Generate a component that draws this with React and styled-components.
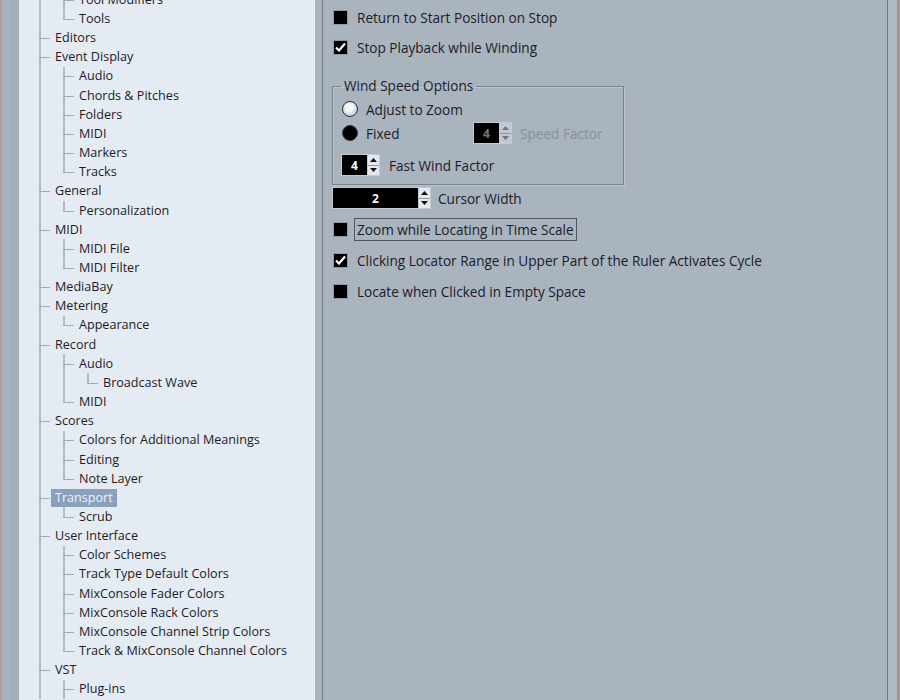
import React from "react";
import styled, { createGlobalStyle } from "styled-components";

const GlobalStyle = createGlobalStyle`
  html, body {
    margin: 0;
    padding: 0;
    background: #a9b4bf;
  }
  * {
    box-sizing: border-box;
  }
`;

const ROW_H = 19.17;
const INDENT = 24;

// preferences tree, scrolled part-way down
const treeItems = [
  { label: "Tool Modifiers", level: 2 },
  { label: "Tools", level: 2 },
  { label: "Editors", level: 1 },
  { label: "Event Display", level: 1 },
  { label: "Audio", level: 2 },
  { label: "Chords & Pitches", level: 2 },
  { label: "Folders", level: 2 },
  { label: "MIDI", level: 2 },
  { label: "Markers", level: 2 },
  { label: "Tracks", level: 2 },
  { label: "General", level: 1 },
  { label: "Personalization", level: 2 },
  { label: "MIDI", level: 1 },
  { label: "MIDI File", level: 2 },
  { label: "MIDI Filter", level: 2 },
  { label: "MediaBay", level: 1 },
  { label: "Metering", level: 1 },
  { label: "Appearance", level: 2 },
  { label: "Record", level: 1 },
  { label: "Audio", level: 2 },
  { label: "Broadcast Wave", level: 3 },
  { label: "MIDI", level: 2 },
  { label: "Scores", level: 1 },
  { label: "Colors for Additional Meanings", level: 2 },
  { label: "Editing", level: 2 },
  { label: "Note Layer", level: 2 },
  { label: "Transport", level: 1, selected: true },
  { label: "Scrub", level: 2 },
  { label: "User Interface", level: 1 },
  { label: "Color Schemes", level: 2 },
  { label: "Track Type Default Colors", level: 2 },
  { label: "MixConsole Fader Colors", level: 2 },
  { label: "MixConsole Rack Colors", level: 2 },
  { label: "MixConsole Channel Strip Colors", level: 2 },
  { label: "Track & MixConsole Channel Colors", level: 2 },
  { label: "VST", level: 1 },
  { label: "Plug-ins", level: 2 },
];

// does the item at index i have a later sibling? (list keeps going past the end)
function hasNext(items, i) {
  const lvl = items[i].level;
  for (let j = i + 1; j < items.length; j++) {
    if (items[j].level < lvl) return false;
    if (items[j].level === lvl) return true;
  }
  return true;
}

function ancestorHasNext(items, i, depth) {
  for (let j = i - 1; j >= 0; j--) {
    if (items[j].level === depth) return hasNext(items, j);
    if (items[j].level < depth) return true;
  }
  return true;
}

const Window = styled.div`
  display: flex;
  width: 900px;
  height: 700px;
  overflow: hidden;
  font-family: "Open Sans", "Noto Sans", sans-serif;
`;

const LeftEdge = styled.div`
  flex: 0 0 19px;
  background: linear-gradient(
    to right,
    #b99a9d 0 2px,
    #a7b3be 2px 11px,
    #a2aeb9 11px
  );
`;

const TreePanel = styled.div`
  flex: 0 0 296px;
  background: #e5ebf2;
  overflow: hidden;
`;

const TreeList = styled.div`
  margin-top: -9.8px;
`;

const TreeRow = styled.div`
  position: relative;
  height: ${ROW_H}px;
  display: flex;
  align-items: center;
`;

const VLine = styled.span`
  position: absolute;
  left: ${(p) => p.$x}px;
  top: 0;
  width: 2px;
  height: ${(p) => (p.$half ? "50%" : "100%")};
  background: #b3bcc7;
`;

const HLine = styled.span`
  position: absolute;
  left: ${(p) => p.$x}px;
  top: 50%;
  width: 11px;
  height: 1px;
  background: #a3acb7;
`;

const TreeLabel = styled.span`
  margin-left: ${(p) => p.$x}px;
  padding: 0 4px;
  height: 18px;
  line-height: 18px;
  font-size: 12.6px;
  white-space: nowrap;
  color: ${(p) => (p.$selected ? "#eef3f9" : "#1c1b27")};
  background: ${(p) => (p.$selected ? "#8aa0bd" : "transparent")};
`;

const Gutter = styled.div`
  flex: 0 0 8px;
  background: #a9b4bf;
  border-right: 1px solid #727c87;
`;

const Content = styled.div`
  flex: 0 0 564px;
  background: #a9b4bf;
  padding: 5px 0 0 9px;
  display: flex;
  flex-direction: column;
  align-items: flex-start;
  font-size: 13.6px;
  color: #1c1b27;
`;

const RightEdge = styled.div`
  flex: 1;
  border-left: 1px solid #6e7782;
  background: linear-gradient(
    to right,
    #b1bbc5 0 9px,
    #8f98a2 9px 10px,
    #a9929a 10px
  );
`;

const Row = styled.div`
  display: flex;
  align-items: center;
  height: ${(p) => p.$h || 22}px;
  margin-top: ${(p) => p.$mt || 0}px;
  gap: ${(p) => p.$gap || 9}px;
  white-space: nowrap;
`;

const Box = styled.span`
  width: 15px;
  height: 15px;
  margin-left: 1px;
  background: #000;
  border: 1px solid #8f98a3;
  display: flex;
  align-items: center;
  justify-content: center;
`;

const Label = styled.span`
  color: ${(p) => (p.$disabled ? "#87919d" : "#1c1b27")};
  ${(p) =>
    p.$focused &&
    `
    border: 1px solid #4f5761;
    padding: 1px 2px;
    margin-left: -3px;
  `}
`;

const GroupBox = styled.fieldset`
  margin: 18px 0 0 0;
  width: 292px;
  padding: 0 8px 8px 8px;
  border: 1px solid #78828d;
  box-shadow: inset 1px 1px 0 #bdc6cf, 1px 1px 0 #bdc6cf;
  display: flex;
  flex-direction: column;
  align-items: flex-start;
`;

const Legend = styled.legend`
  padding: 0 3px;
  height: 18px;
  line-height: 18px;
  font-size: 13.6px;
  color: #1c1b27;
`;

const RadioDot = styled.span`
  width: 16px;
  height: 16px;
  margin-left: 1px;
  border-radius: 50%;
  border: 1px solid ${(p) => (p.$on ? "#30353b" : "#2a2e34")};
  background: ${(p) =>
    p.$on
      ? "#000"
      : "radial-gradient(circle at 45% 40%, #f4f6f8 0 30%, #bcc4cc 80%)"};
`;

const FixedLabel = styled.span`
  width: 99px;
`;

const Spin = styled.div`
  display: flex;
  height: 22px;
`;

const SpinValue = styled.div`
  width: ${(p) => p.$w}px;
  background: #000;
  border: 1px solid #c3cad2;
  border-right: none;
  display: flex;
  align-items: center;
  justify-content: center;
  font-weight: 700;
  font-size: 12px;
  color: ${(p) => (p.$disabled ? "#6d7783" : "#f2f6ff")};
`;

const SpinArrows = styled.div`
  width: 13px;
  display: flex;
  flex-direction: column;
  border: 1px solid #c3cad2;
  background: #8d96a1;
  gap: 1px;
`;

const SpinButton = styled.div`
  flex: 1;
  background: ${(p) => (p.$disabled ? "#c2c9d1" : "#e4e8ec")};
  display: flex;
  align-items: center;
  justify-content: center;
`;

function Arrow({ down, disabled }) {
  return (
    <svg width="7" height="4" viewBox="0 0 7 4">
      <polygon
        points={down ? "0,0 7,0 3.5,4" : "0,4 7,4 3.5,0"}
        fill={disabled ? "#6d7783" : "#111"}
      />
    </svg>
  );
}

function SpinBox({ value, width, disabled }) {
  return (
    <Spin>
      <SpinValue $w={width} $disabled={disabled}>
        {value}
      </SpinValue>
      <SpinArrows>
        <SpinButton $disabled={disabled}>
          <Arrow disabled={disabled} />
        </SpinButton>
        <SpinButton $disabled={disabled}>
          <Arrow down disabled={disabled} />
        </SpinButton>
      </SpinArrows>
    </Spin>
  );
}

function Check({ checked, label, focused, mt }) {
  return (
    <Row $mt={mt} $h={24}>
      <Box>
        {checked && (
          <svg width="11" height="10" viewBox="0 0 11 10">
            <path
              d="M1 5.5 L4 8.5 L10 1.5"
              fill="none"
              stroke="#fff"
              strokeWidth="2.2"
            />
          </svg>
        )}
      </Box>
      <Label $focused={focused}>{label}</Label>
    </Row>
  );
}

function Tree() {
  return (
    <TreeList>
      {treeItems.map((item, i) => {
        const lines = [];
        for (let d = 1; d < item.level; d++) {
          if (ancestorHasNext(treeItems, i, d)) {
            lines.push(<VLine key={"a" + d} $x={20 + INDENT * (d - 1)} />);
          }
        }
        const x = 20 + INDENT * (item.level - 1);
        const more = hasNext(treeItems, i);
        return (
          <TreeRow key={i}>
            {lines}
            <VLine $x={x} $half={!more} />
            <HLine $x={x} />
            <TreeLabel $x={x + 12} $selected={item.selected}>
              {item.label}
            </TreeLabel>
          </TreeRow>
        );
      })}
    </TreeList>
  );
}

export default function App() {
  return (
    <>
      <GlobalStyle />
      <Window>
        <LeftEdge />
        <TreePanel>
          <Tree />
        </TreePanel>
        <Gutter />
        <Content>
          <Check label="Return to Start Position on Stop" />
          <Check checked label="Stop Playback while Winding" mt={6} />
          <GroupBox>
            <Legend>Wind Speed Options</Legend>
            <Row $h={24} $mt={2} $gap={8}>
              <RadioDot />
              <span>Adjust to Zoom</span>
            </Row>
            <Row $h={24} $gap={8}>
              <RadioDot $on />
              <FixedLabel>Fixed</FixedLabel>
              <SpinBox value="4" width={26} disabled />
              <Label $disabled>Speed Factor</Label>
            </Row>
            <Row $mt={9}>
              <SpinBox value="4" width={26} />
              <span>Fast Wind Factor</span>
            </Row>
          </GroupBox>
          <Row $mt={2} $gap={7}>
            <SpinBox value="2" width={86} />
            <span>Cursor Width</span>
          </Row>
          <Check focused label="Zoom while Locating in Time Scale" mt={8} />
          <Check
            checked
            label="Clicking Locator Range in Upper Part of the Ruler Activates Cycle"
            mt={7}
          />
          <Check label="Locate when Clicked in Empty Space" mt={7} />
        </Content>
        <RightEdge />
      </Window>
    </>
  );
}
